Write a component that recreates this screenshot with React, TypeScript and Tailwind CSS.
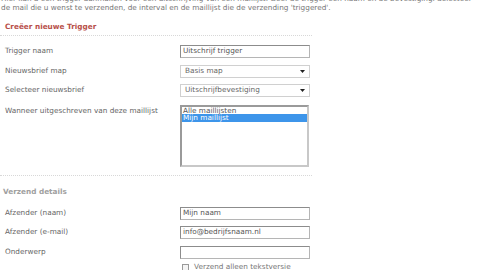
import React from "react";

const font = { fontFamily: '"DejaVu Sans", Verdana, sans-serif' };

function Row({ label, children }: { label: string; children: React.ReactNode }) {
  return (
    <div className="flex items-center h-[19.5px]">
      <div className="w-[180px] pl-[5px] text-[7.3px] text-[#666]">{label}</div>
      {children}
    </div>
  );
}

function Input({ value = "" }: { value?: string }) {
  return (
    <div className="w-[130px] h-[13px] border border-[#b5b5b5] border-t-[#8c8c8c] border-l-[#8c8c8c] bg-white flex items-center pl-[2px] text-[7.3px] text-[#555]">
      {value}
    </div>
  );
}

function Select({ value }: { value: string }) {
  return (
    <div className="w-[130px] h-[13px] border border-[#d0d0d0] bg-white flex items-center justify-between pl-[4px] pr-[4px] text-[7.3px] text-[#666]">
      <span>{value}</span>
      <svg width="5" height="3" viewBox="0 0 5 3"><path d="M0 0h5L2.5 3z" fill="#222" /></svg>
    </div>
  );
}

export default function App() {
  return (
    <div className="w-[480px] h-[270px] overflow-hidden bg-white relative" style={font}>
      <div className="mt-[-6px] pl-[1px] text-[7.3px] leading-[9px] text-[#777] w-[478px] whitespace-nowrap">
        <div>Hier kan u een trigger aanmaken voor een uitschrijving van een maillijst. Geef de trigger een naam en de bevestiging. Selecteer</div>
        <div>de mail die u wenst te verzenden, de interval en de maillijst die de verzending 'triggered'.</div>
      </div>
      <div className="mt-[10px] pl-[5px] text-[7.3px] font-bold text-[#b8504a] leading-[9px]">Creëer nieuwe Trigger</div>
      <div className="mt-[4px] w-[312px] border-t border-dotted border-[#d8d8d8]" />
      <div className="mt-[6px]">
        <Row label="Trigger naam"><Input value="Uitschrijf trigger" /></Row>
        <Row label="Nieuwsbrief map"><Select value="Basis map" /></Row>
        <Row label="Selecteer nieuwsbrief"><Select value="Uitschrijfbevestiging" /></Row>
        <div className="flex mt-[4px]">
          <div className="w-[180px] pl-[5px] text-[7.3px] text-[#666] pt-[1px]">Wanneer uitgeschreven van deze maillijst</div>
          <div className="w-[129px] h-[62px] border-2 border-[#c8c8c8] border-t-[#9a9a9a] border-l-[#9a9a9a] bg-white text-[7.3px] leading-[7.5px]">
            <div className="pl-[1px] text-[#555]">Alle maillijsten</div>
            <div className="pl-[1px] bg-[#3d95ea] text-white">Mijn maillijst</div>
          </div>
        </div>
      </div>
      <div className="mt-[8px] w-[312px] border-t border-dotted border-[#d8d8d8]" />
      <div className="mt-[11px] pl-[3px] text-[7.3px] font-bold text-[#a0a0a0] leading-[9px]">Verzend details</div>
      <div className="mt-[8px]">
        <Row label="Afzender (naam)"><Input value="Mijn naam" /></Row>
        <Row label="Afzender (e-mail)"><Input value="info@bedrijfsnaam.nl" /></Row>
        <Row label="Onderwerp"><Input /></Row>
        <div className="flex items-center pl-[182px] gap-[5px] text-[7.3px] text-[#777]">
          <div className="w-[7px] h-[7px] border border-[#999] bg-[#f4f4f4]" />
          <span>Verzend alleen tekstversie</span>
        </div>
      </div>
    </div>
  );
}
